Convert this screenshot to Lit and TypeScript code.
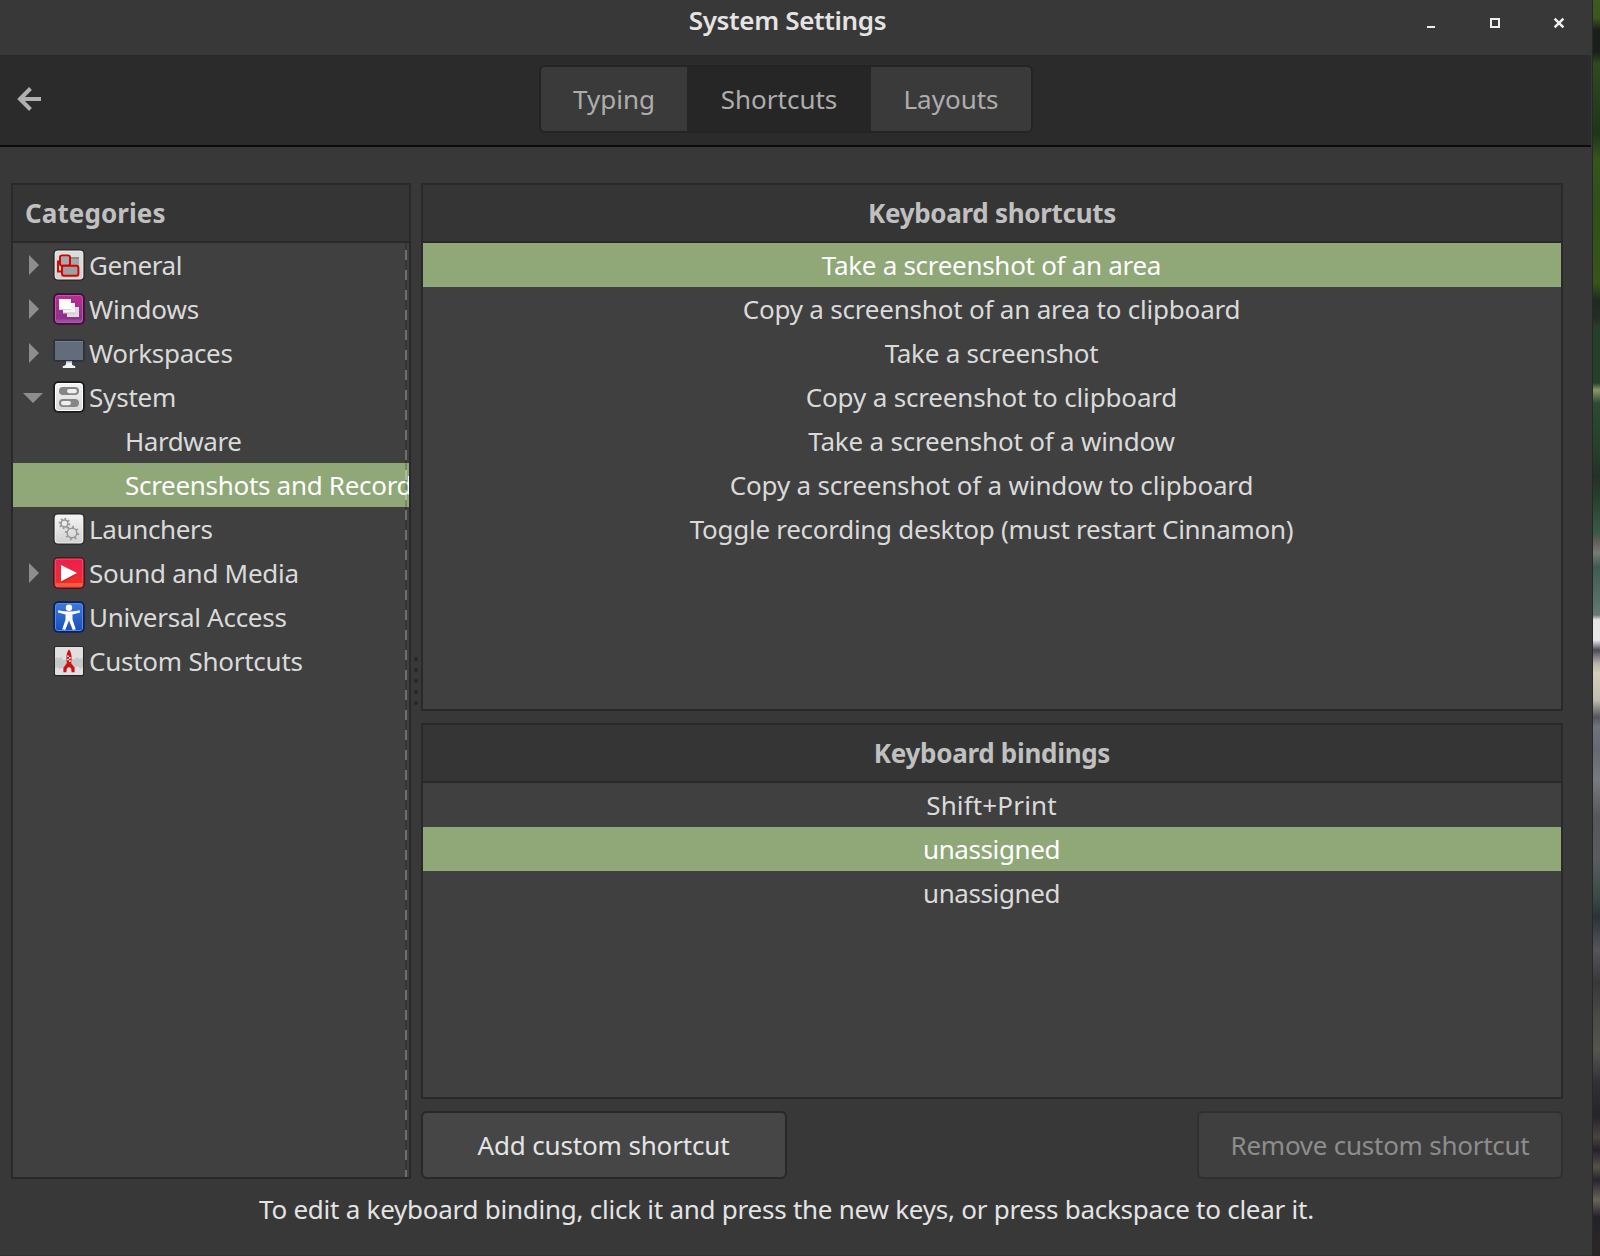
import { LitElement, html, svg, css, nothing, TemplateResult } from "lit";
import { customElement, property } from "lit/decorators.js";
import { classMap } from "lit/directives/class-map.js";
import { styleMap } from "lit/directives/style-map.js";

const tile = (id: string, top: string, bottom: string, stroke: string, rim: string, edge = 1.6) => svg`
  <defs><linearGradient id=${id} x1="0" y1="0" x2="0" y2="1">
    <stop offset="0" stop-color=${top}/><stop offset="1" stop-color=${bottom}/>
  </linearGradient></defs>
  <rect x="0.2" y="0.2" width="31.6" height="31.6" rx="5" fill=${stroke}/>
  <rect x=${edge} y=${edge} width=${32 - 2 * edge} height=${32 - 2 * edge} rx="3.4" fill=${rim}/>
  <rect x=${edge + 1} y=${edge + 1} width=${30 - 2 * edge} height=${30 - 2 * edge} rx="2" fill="url(#${id})"/>`;

const gear = (cx: number, cy: number, r: number) => svg`
  <circle cx=${cx} cy=${cy} r=${r} fill="none" stroke="#999" stroke-width="1.5"/>
  ${[0, 45, 90, 135, 180, 225, 270, 315].map(
    (a) => svg`<path d="M${cx} ${cy - r - 2.4}v2.2" stroke="#999" stroke-width="1.8" transform="rotate(${a + 10} ${cx} ${cy})"/>`
  )}`;

const icons: Record<string, TemplateResult> = {
  general: svg`${tile("g1", "#dedede", "#d0d0d0", "#262626", "#e8e8e8")}
    <path d="M17 8h9v10h-9z" fill="#a6a6a6"/><path d="M17 8h9v2h-9z" fill="#8b8b8b"/>
    <path d="M7.4 12.5H5v10h4" fill="none" stroke="#d40000" stroke-width="1.9"/>
    <rect x="7" y="6.4" width="10" height="10.4" rx="2" fill="#a9a9a9" stroke="#d40000" stroke-width="1.9"/>
    <rect x="9" y="16.8" width="16.4" height="10" rx="2" fill="#a0a0a0" stroke="#d40000" stroke-width="1.9"/>`,
  windows: svg`${tile("g2", "#b92c93", "#85338a", "#3c0f38", "#c455a8", 2)}
    <path d="M3 26.5h26v3H3z" fill="#a05aa5" opacity=".7"/>
    <path d="M14 14h12v10H14z" fill="#dcdcdc"/><path d="M10 10h12v10.5H10z" fill="#c9bcc9"/><path d="M10 10h12v9.5H10z" fill="#f4f4f4"/>
    <path d="M6 6h12v11H6z" fill="#ddd0dd"/><path d="M6 6h12v10H6z" fill="#fff"/>`,
  workspaces: svg`<rect x="0.3" y="2.3" width="31.4" height="22.4" rx="2" fill="#2c323c"/>
    <path d="M2 4h28v19H2z" fill="#626c7b"/><path d="M2 4h28v1H2z" fill="#737d8c"/>
    <path d="M13.4 24h5.2l.6 4 3 1.2V31H9.8v-1.8l3-1.2z" fill="#f2f4f7"/><path d="M13.2 24h5.6v1.6h-5.6z" fill="#a9b4c4"/>`,
  system: svg`${tile("g4", "#f4f4f4", "#d9d9d9", "#1b1b1b", "#fff", 2)}
    <rect x="6" y="6" width="20" height="8" rx="4" fill="#858585"/><rect x="14" y="8" width="10" height="4.2" rx="2.1" fill="#efefef"/>
    <rect x="6" y="18" width="20" height="8" rx="4" fill="#858585"/><rect x="8" y="20" width="10" height="4.2" rx="2.1" fill="#efefef"/>`,
  launchers: svg`${tile("g5", "#f4f4f4", "#d2d2d2", "#262626", "#f0f0f0")}
    ${gear(11.5, 10.5, 3.4)}${gear(19, 20, 4.8)}`,
  media: svg`${tile("g6", "#ec2050", "#ef2f26", "#4a0c14", "#f25a6c")}
    <path d="M3 26h26v3.4H3z" fill="#ff6a3c" opacity=".75"/>
    <path d="M8 9l16 8.5L8 26z" fill="#a81820" opacity=".5"/><path d="M8 8l16 8-16 8.4z" fill="#fff"/>`,
  access: svg`${tile("g7", "#3f78dc", "#1950b8", "#0a2258", "#5b8ae6", 2)}
    <circle cx="16" cy="6.8" r="3.2" fill="#fff"/>
    <path d="M5.2 9.2Q16 12 26.8 9.2L27 11.4l-7.6 2.2.2 5.4 3.2 9.2-3 .8L16 19.6 12.2 29l-3-.8 3.2-9.2.2-5.4L5 11.4z" fill="#fff"/>`,
  custom: svg`<rect x="1" y="1.2" width="30" height="30" rx="1.5" fill="#262626"/><rect x="2" y="2" width="28" height="28" rx="1" fill="#e0e0e0"/>
    <path d="M2 14q2-3 4-1l2-1 2 3 12-1 2-2 2 2 4-1v9l-3 2-2-3-3 2H9l-3 1-2-2-2 1z" fill="#c8c8c8"/>
    <path d="M16 4.2c1.8 2.6 2.9 5.6 2.5 9.4l-.3 4.6 3.4 4.6v4.4h-3l-.4-3.4-1.2-1.6h-2l-1.2 1.6-.4 3.4h-3v-4.4l3.4-4.6-.3-4.6c-.4-3.8.7-6.800 2.500-9.400z" fill="#cc1212"/>
    <path d="M14.2 10.500h1.600v1.600h-1.600zM16 12.100h1.600v1.600H16zM14.200 13.700h1.600v1.600h-1.600zM16 15.300h1.600v1.600H16z" fill="#fff"/>`,
};

interface Item {
  label: string;
  tracking: number;
}

interface Category extends Item {
  icon?: string;
  expander?: "closed" | "open";
  selected?: boolean;
}

const categories: Category[] = [
  { label: "General", tracking: -0.4, icon: "general", expander: "closed" },
  { label: "Windows", tracking: -0.15, icon: "windows", expander: "closed" },
  { label: "Workspaces", tracking: -0.3, icon: "workspaces", expander: "closed" },
  { label: "System", tracking: -0.2, icon: "system", expander: "open" },
  { label: "Hardware", tracking: -0.45 },
  { label: "Screenshots and Recording", tracking: -0.3, selected: true },
  { label: "Launchers", tracking: -0.35, icon: "launchers" },
  { label: "Sound and Media", tracking: -0.27, icon: "media", expander: "closed" },
  { label: "Universal Access", tracking: -0.28, icon: "access" },
  { label: "Custom Shortcuts", tracking: -0.25, icon: "custom" },
];

const shortcuts: Item[] = [
  { label: "Take a screenshot of an area", tracking: -0.29 },
  { label: "Copy a screenshot of an area to clipboard", tracking: -0.2 },
  { label: "Take a screenshot", tracking: -0.24 },
  { label: "Copy a screenshot to clipboard", tracking: -0.16 },
  { label: "Take a screenshot of a window", tracking: -0.2 },
  { label: "Copy a screenshot of a window to clipboard", tracking: -0.17 },
  { label: "Toggle recording desktop (must restart Cinnamon)", tracking: -0.28 },
];

const bindings: Item[] = [
  { label: "Shift+Print", tracking: 0.15 },
  { label: "unassigned", tracking: -0.4 },
  { label: "unassigned", tracking: -0.4 },
];

const track = (i: Item) => styleMap({ letterSpacing: `${i.tracking}px` });

@customElement("category-tree")
export class CategoryTree extends LitElement {
  static styles = css`
    :host { display: flex; flex-direction: column; box-sizing: border-box; border: 2px solid #292929; background: #404040; overflow: hidden; position: relative; }
    .head { flex: none; height: 56px; line-height: 57px; padding-left: 12px; background: #353535; border-bottom: 2px solid #292929; font-weight: 700; letter-spacing: 0.08px; color: #c0c0c0; }
    .row { flex: none; display: flex; align-items: center; height: 44px; line-height: 44px; color: #dadada; white-space: nowrap; }
    .selected { background: #90a877; color: #fff; }
    .slot { flex: none; display: flex; width: 40px; height: 32px; }
    .slot svg { width: 40px; height: 32px; }
    .icon { flex: none; width: 32px; height: 32px; margin-right: 4px; }
    .child { padding-left: 112px; }
    .edge { position: absolute; right: 2px; top: 58px; bottom: 0; width: 2px;
      background: repeating-linear-gradient(to bottom, rgba(0,0,0,.18) 0 7px, rgba(255,255,255,.24) 7px 17px, rgba(0,0,0,.18) 17px 20px); }
  `;
  render() {
    return html`
      <div class="head">Categories</div>
      ${categories.map((c) => html`
        <div class=${classMap({ row: true, selected: !!c.selected, child: !c.icon })}>
          ${c.icon ? html`
            <span class="slot">${c.expander ? html`<svg viewBox="0 0 40 32">
              <path d=${c.expander === "open" ? "M10 12h20L20 22z" : "M16 6l10 10-10 10z"} fill="#8d8d8d"/></svg>` : nothing}</span>
            <svg class="icon" viewBox="0 0 32 32">${icons[c.icon]}</svg>` : nothing}
          <span style=${track(c)}>${c.label}</span>
        </div>`)}
      <div class="edge"></div>`;
  }
}

@customElement("list-panel")
export class ListPanel extends LitElement {
  @property() heading = "";
  @property({ attribute: false }) items: Item[] = [];
  @property({ type: Number }) selected = -1;
  static styles = css`
    :host { display: flex; flex-direction: column; box-sizing: border-box; border: 2px solid #292929; background: #404040; text-align: center; }
    .head { flex: none; height: 56px; line-height: 57px; background: #353535; border-bottom: 2px solid #292929; font-weight: 700; letter-spacing: -0.3px; color: #c0c0c0; }
    .row { flex: none; height: 44px; line-height: 44px; padding-right: 1px; color: #dadada; white-space: nowrap; }
    .selected { background: #90a877; color: #fff; }
  `;
  render() {
    return html`<div class="head">${this.heading}</div>
      ${this.items.map((t, i) => html`<div class=${classMap({ row: true, selected: i === this.selected })} style=${track(t)}>${t.label}</div>`)}`;
  }
}

@customElement("app-root")
export class AppRoot extends LitElement {
  static styles = css`
    :host { display: flex; box-sizing: border-box; width: 1600px; height: 1256px; overflow: hidden; background: #383838;
      font: 26px "Noto Sans", sans-serif; color: #e4e4e4; }
    .window { flex: 1; display: flex; flex-direction: column; min-width: 0; box-sizing: border-box; border-bottom: 1px solid #303030; }
    .titlebar { flex: none; height: 55px; display: grid; grid-template-columns: 1fr auto 1fr; padding-right: 17px; }
    .title { grid-column: 2; font-weight: 600; line-height: 40px; letter-spacing: -0.33px; }
    .controls { justify-self: end; display: flex; height: 46px; align-items: center; margin-right: -16px; }
    .controls svg { width: 64px; height: 32px; }
    .toolbar { flex: none; display: grid; grid-template-columns: 539px 494px 1fr; align-items: center; height: 90px; margin-right: 1px; background: #2b2b2b; border-bottom: 2px solid #0c0c0c; }
    .back { width: 32px; height: 32px; margin-left: 13px; margin-top: -2px; }
    .tabs { display: flex; box-sizing: border-box; height: 68px; align-self: end; margin-bottom: 12px; border: 2px solid #242424; border-radius: 6px; background: #3a3a3a; overflow: hidden; color: #adadad; line-height: 65px; text-align: center; }
    .tab { width: 146px; }
    .tab.active { width: 184px; background: #262626; }
    .tab.last { width: 160px; }
    .body { flex: none; display: grid; grid-template-columns: 400px 10px 1142px; height: 996px; padding: 36px 0 0 11px; }
    .grip { display: grid; place-content: center; gap: 7px; }
    .dot { width: 4px; height: 4px; border-radius: 50%; background: #262626; }
    .right { display: grid; grid-template-rows: 528px 376px 68px; gap: 12px; }
    .actions { display: flex; justify-content: space-between; }
    .button { box-sizing: border-box; width: 366px; padding-right: 1px; border: 2px solid #292929; border-radius: 6px; background: #464646; line-height: 64px; text-align: center; letter-spacing: -0.15px; }
    .disabled { padding-right: 0; background: #3f3f3f; border-color: #303030; color: #8d8d8d; letter-spacing: -0.25px; }
    .hint { text-align: center; line-height: 60px; width: 1573px; letter-spacing: -0.25px; }
    .wallpaper { flex: none; width: 7px; border-left: 1px solid #272727;
      background: linear-gradient(#3c5a1e 0, #3d5520 18px, #1a1f1c 30px, #1a1f1c 52px, #2f4a20 64px, #1f3519 134px, #36551d 160px, #2f5018 200px, #37551a 283px, #1f2a20 300px, #242b26 317px, #24402a 327px, #24402a 383px, #8a9868 390px, #2c4a33 403px, #24402a 450px, #253028 477px, #263f2c 497px, #3a5a48 533px, #5a5c55 540px, #7a7a76 553px, #3f5a50 567px, #56706a 600px, #6a7a72 615px, #e6e6e6 620px, #e8e8e8 640px, #4a4a58 650px, #b5b0aa 663px, #d5d0b8 673px, #c0bcb0 700px, #55565c 717px, #70727e 727px, #666873 750px, #787a80 780px, #55575c 817px, #5a5b5f 860px, #3a4a44 897px, #2c3238 917px, #55555a 950px, #38373a 983px, #4a4a46 1017px, #55554f 1050px, #333035 1083px, #25242a 1117px, #4a4440 1137px, #24222a 1150px, #55504a 1167px, #26252b 1180px, #6a625c 1200px, #242228 1217px, #2a2626 1250px); }
  `;
  render() {
    return html`
      <div class="window">
        <div class="titlebar">
          <div class="title">System Settings</div>
          <div class="controls">
            <svg viewBox="0 0 64 32"><path d="M28 19h8v2h-8z" fill="#eee"/></svg>
            <svg viewBox="0 0 64 32"><path d="M28 12h8v8h-8z" fill="none" stroke="#eee" stroke-width="2"/></svg>
            <svg viewBox="0 0 64 32"><path d="M27.6 11.6l8.8 8.8M36.4 11.6l-8.8 8.8" stroke="#eee" stroke-width="2.5"/></svg>
          </div>
        </div>
        <div class="toolbar">
          <svg class="back" viewBox="0 0 32 32"><path d="M28 16H8M17.5 5.500L7 16l10.500 10.500" fill="none" stroke="#b0b0b0" stroke-width="4"/></svg>
          <div class="tabs"><div class="tab">Typing</div><div class="tab active">Shortcuts</div><div class="tab last">Layouts</div></div>
        </div>
        <div class="body">
          <category-tree></category-tree>
          <div class="grip">${[0, 1, 2, 3, 4].map(() => html`<i class="dot"></i>`)}</div>
          <div class="right">
            <list-panel heading="Keyboard shortcuts" .items=${shortcuts} .selected=${0}></list-panel>
            <list-panel heading="Keyboard bindings" .items=${bindings} .selected=${1}></list-panel>
            <div class="actions"><div class="button">Add custom shortcut</div><div class="button disabled">Remove custom shortcut</div></div>
          </div>
        </div>
        <div class="hint">To edit a keyboard binding, click it and press the new keys, or press backspace to clear it.</div>
      </div>
      <div class="wallpaper"></div>`;
  }
}
